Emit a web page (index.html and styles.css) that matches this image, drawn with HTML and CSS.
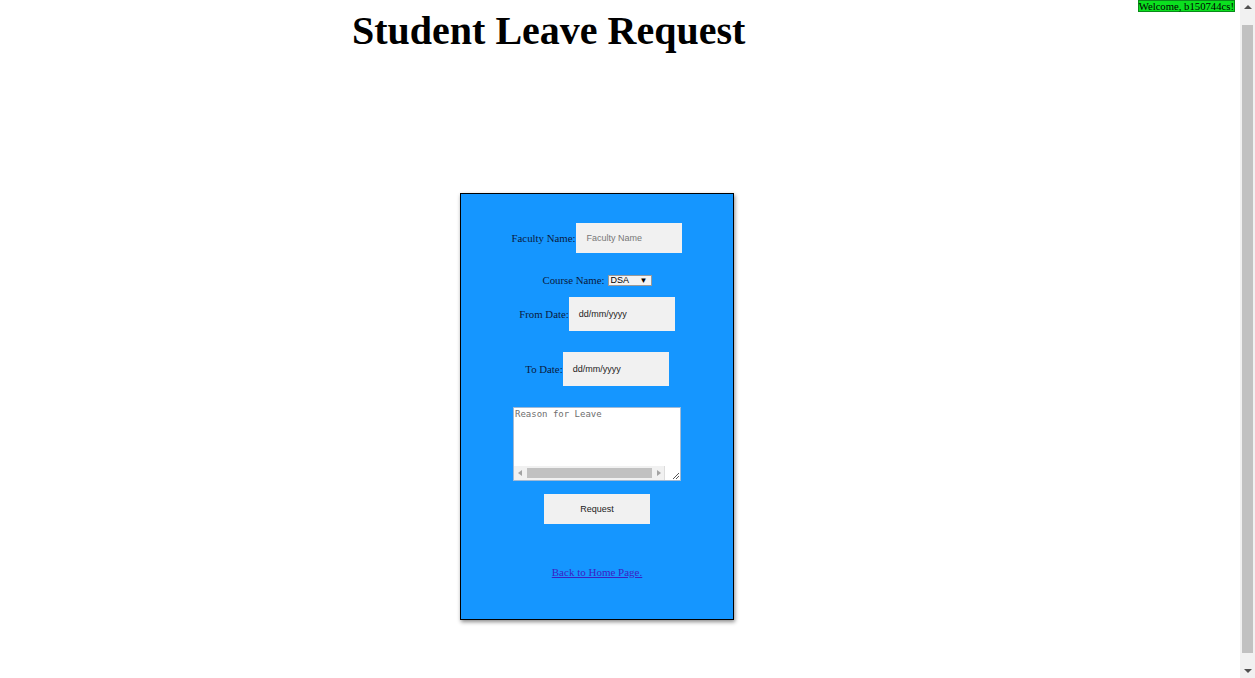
FILE: index.html
```html
<!DOCTYPE html>
<html>
<head>
<meta charset="utf-8">
<link rel="stylesheet" href="styles.css">
</head>
<body>
<div class="page">
  <div class="content">
    <div class="welcome">Welcome, b150744cs!</div>
    <header class="header">
      <h1 class="title">Student Leave Request</h1>
    </header>
    <main class="main">
      <form class="card">
        <div class="row row-faculty">
          <label class="label">Faculty Name:</label>
          <input class="field" type="text" placeholder="Faculty Name">
        </div>
        <div class="row row-course">
          <label class="label">Course Name:</label>
          <span class="select"><span class="select-text">DSA</span><span class="select-arrow">&#9660;</span></span>
        </div>
        <div class="row row-from">
          <label class="label">From Date:</label>
          <span class="field date">dd/mm/yyyy</span>
        </div>
        <div class="row row-to">
          <label class="label">To Date:</label>
          <span class="field date">dd/mm/yyyy</span>
        </div>
        <div class="row row-reason">
          <div class="textbox">
            <textarea class="textarea" placeholder="Reason for Leave"></textarea>
            <div class="hscroll">
              <span class="arrow arrow-left"></span>
              <span class="thumb"></span>
              <span class="arrow arrow-right"></span>
            </div>
            <span class="resizer">
              <svg width="8" height="8" viewBox="0 0 8 8"><path d="M7 1 L1 7 M7 4 L4 7" stroke="#555" stroke-width="1" fill="none"/></svg>
            </span>
          </div>
        </div>
        <div class="row row-button">
          <button class="button" type="button">Request</button>
        </div>
        <div class="row row-link">
          <a class="link" href="#">Back to Home Page. </a>
        </div>
      </form>
    </main>
  </div>
  <div class="vscroll">
    <span class="varrow varrow-up"></span>
    <span class="vthumb"></span>
    <span class="varrow varrow-down"></span>
  </div>
</div>
</body>
</html>
```
FILE: styles.css
```css
html, body {
  margin: 0;
  padding: 0;
  overflow: hidden;
}
body {
  font-family: "Liberation Serif", "Times New Roman", serif;
  background: #fff;
  color: #000;
}
.page {
  display: flex;
  height: 678px;
}
.content {
  flex: 1;
  position: relative;
}
.vscroll {
  width: 15px;
  height: 678px;
  background: #f1f1f1;
  display: flex;
  flex-direction: column;
  align-items: center;
}
.varrow {
  width: 0;
  height: 0;
  border-left: 4px solid transparent;
  border-right: 4px solid transparent;
}
.varrow-up {
  border-bottom: 4px solid #505050;
  margin: 5px 0 16px 0;
}
.varrow-down {
  border-top: 4px solid #505050;
  margin: 16px 0 5px 0;
}
.vthumb {
  flex: 1;
  width: 11px;
  background: #c1c1c1;
}
.welcome {
  position: absolute;
  top: 0;
  right: 5px;
  background: #0be01f;
  border: 1px solid #0a8a1a;
  font-size: 10.7px;
  line-height: 10px;
  color: #000;
}
.header {
  display: flex;
  padding-left: 352px;
}
.title {
  margin: 8px 0 0 0;
  font-size: 40px;
  line-height: 46px;
  font-weight: bold;
}
.main {
  display: flex;
  padding-left: 460px;
  padding-top: 139px;
}
.card {
  width: 272px;
  height: 396px;
  background: #1596ff;
  border: 1px solid #000;
  box-shadow: 1px 2px 4px rgba(0,0,0,0.45);
  display: flex;
  flex-direction: column;
  align-items: center;
  padding-top: 29px;
  box-sizing: content-box;
  margin: 0;
}
.row {
  display: flex;
  align-items: center;
  justify-content: center;
}
.label {
  font-size: 10.8px;
  line-height: 11px;
  color: #0a1a40;
}
.field {
  width: 106px;
  height: 30px;
  background: #f1f1f1;
  border: none;
  padding: 0 0 0 10px;
  box-sizing: border-box;
  font-family: "Liberation Sans", Arial, sans-serif;
  font-size: 9px;
  color: #222;
  outline: none;
  margin-left: 1px;
}
.field::placeholder {
  color: #777;
}
.date {
  display: flex;
  align-items: center;
  height: 34px;
  margin-left: 0;
}
.row-course {
  margin-top: 22px;
}
.select {
  display: inline-flex;
  align-items: center;
  justify-content: space-between;
  width: 44px;
  height: 11px;
  box-sizing: border-box;
  background: #f3f3f3;
  border: 1px solid #999;
  margin-left: 3px;
  padding: 0 3px 0 2px;
  font-family: "Liberation Sans", Arial, sans-serif;
  font-size: 9px;
  line-height: 9px;
  color: #000;
}
.select-arrow {
  font-size: 8px;
}
.row-from {
  margin-top: 11px;
}
.row-to {
  margin-top: 21px;
}
.row-reason {
  margin-top: 21px;
}
.textbox {
  position: relative;
  width: 168px;
  height: 74px;
  box-sizing: border-box;
  background: #fff;
  border: 1px solid #9fb9d6;
  display: flex;
  flex-direction: column;
}
.textarea {
  flex: 1;
  border: none;
  resize: none;
  outline: none;
  padding: 1px 0 0 1px;
  font-family: "DejaVu Sans Mono", "Liberation Mono", monospace;
  font-size: 9px;
  line-height: 10px;
  background: #fff;
  overflow: hidden;
}
.textarea::placeholder {
  color: #6e6e6e;
}
.hscroll {
  height: 14px;
  background: #f1f1f1;
  display: flex;
  align-items: center;
  margin-right: 15px;
}
.arrow {
  width: 0;
  height: 0;
  border-top: 3px solid transparent;
  border-bottom: 3px solid transparent;
}
.arrow-left {
  border-right: 4px solid #a3a3a3;
  margin: 0 5px 0 4px;
}
.arrow-right {
  border-left: 4px solid #a3a3a3;
  margin: 0 4px 0 5px;
}
.thumb {
  flex: 1;
  height: 10px;
  background: #c1c1c1;
}
.resizer {
  position: absolute;
  right: 0;
  bottom: 0;
  width: 15px;
  height: 14px;
  background: #fff;
  border-left: 1px solid #ddd;
  display: flex;
  align-items: flex-end;
  justify-content: flex-end;
}
.row-button {
  margin-top: 13px;
}
.button {
  width: 106px;
  height: 30px;
  background: #f1f1f1;
  border: none;
  font-family: "Liberation Sans", Arial, sans-serif;
  font-size: 9px;
  color: #222;
  padding: 0;
}
.row-link {
  margin-top: 42px;
}
.link {
  font-size: 11px;
  color: #3b1fc4;
  text-decoration: underline;
}
```
